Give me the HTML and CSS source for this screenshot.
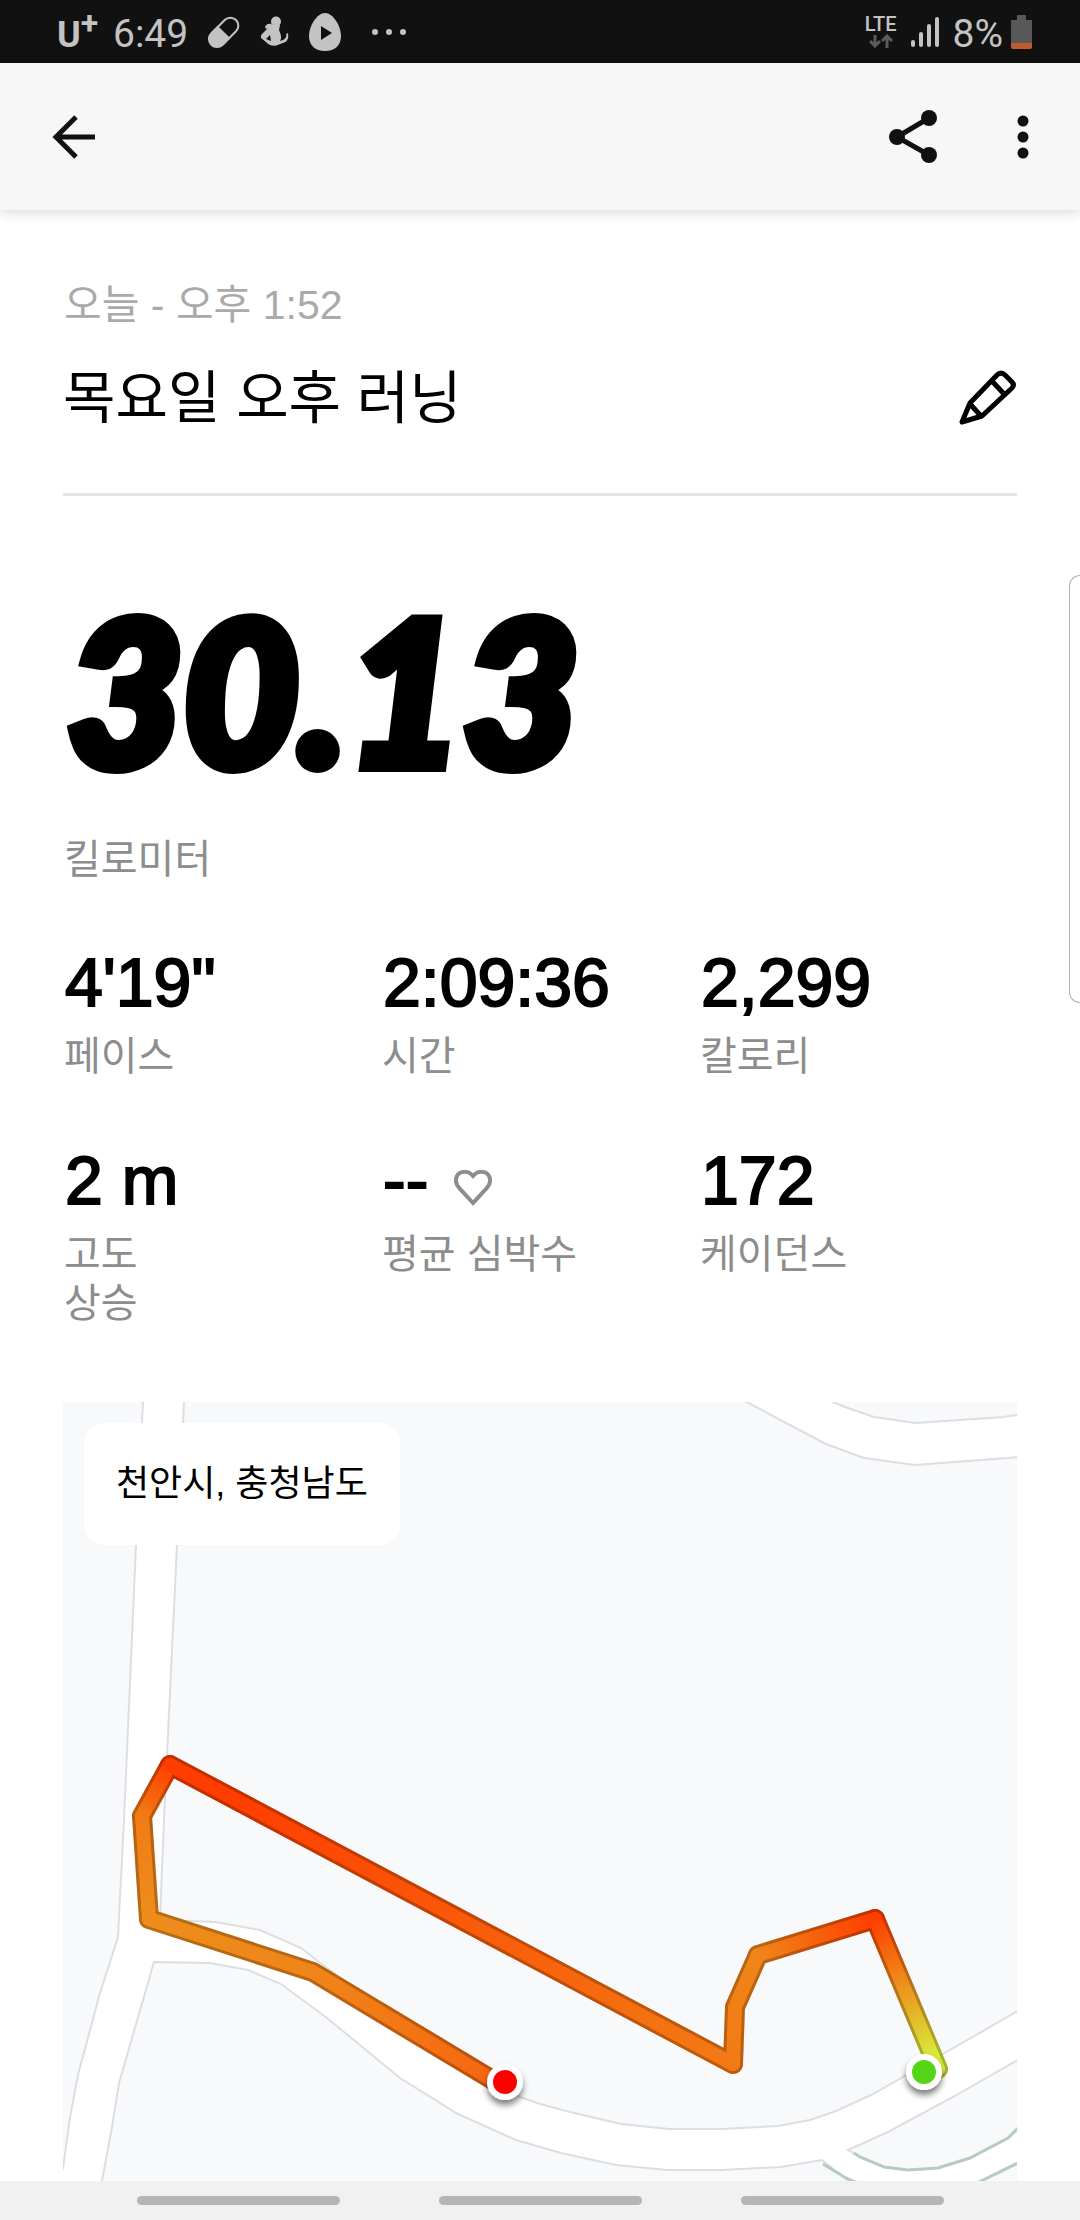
FILE: index.html
```html
<!DOCTYPE html>
<html lang="ko">
<head>
<meta charset="utf-8">
<meta name="viewport" content="width=device-width, initial-scale=1">
<title>목요일 오후 러닝</title>
<link rel="stylesheet" href="styles.css">
</head>
<body>
<div class="status">
  <div class="status-left">
    <span class="carrier">U<span class="carrier-plus">+</span></span>
    <span class="clock">6:49</span>
    <svg class="ic-pill" width="34" height="34" viewBox="0 0 34 34">
      <g transform="rotate(-45 17 17)"><rect x="0" y="9" width="34" height="16" rx="8" fill="none" stroke="#c3c3c3" stroke-width="2"/><path d="M17 8H7A9 9 0 0 0 7 26H17Z" fill="#c3c3c3"/></g>
    </svg>
    <svg class="ic-figure" width="28" height="32" viewBox="0 0 28 32" fill="#c3c3c3">
      <circle cx="15" cy="5.500" r="5"/>
      <path d="M11 9h8l-1 5c2 5 3 8 1 11l3-1c3-2 4-4 3-6l2-1c1 6-1 9-5 10l-3 1c-5 3-11 2-14-2l-5-4c-1-1 0-3 1-4l7-7z"/>
      <path d="M4 11c1-3 4-4 7-3l-1 3-5 2z"/>
      <path d="M5 23l4-4 1 6z" fill="#111"/>
    </svg>
    <svg class="ic-egg" width="32" height="38" viewBox="0 0 32 38">
      <path d="M16 0C24 0 32 13 32 23C32 32 26 38 16 38S0 32 0 23C0 13 8 0 16 0Z" fill="#c3c3c3"/><path d="M12 13L23 20L12 27Z" fill="#111"/>
    </svg>
    <svg class="ic-more" width="34" height="8" viewBox="0 0 34 8" fill="#c3c3c3"><circle cx="3" cy="4" r="3"/><circle cx="17" cy="4" r="3"/><circle cx="31" cy="4" r="3"/></svg>
  </div>
  <div class="status-right">
    <div class="lte"><span>LTE</span>
      <svg width="24" height="14" viewBox="0 0 24 14" fill="none" stroke="#5c5c5c" stroke-width="3"><path d="M6 1V12M1 7L6 12L11 7M18 14V2M13 7L18 2L23 7"/></svg>
    </div>
    <svg width="28" height="32" viewBox="0 0 28 32" stroke="#c3c3c3" stroke-width="4" stroke-linecap="round"><path d="M2 26V29M10 18V29M18 10V29M26 3V29"/></svg>
    <span class="battery">
      <span class="battery-text">8%</span>
      <svg width="21" height="34" viewBox="0 0 21 34"><path d="M6 1Q6 0 7 0H14Q15 0 15 1V5H20Q21 5 21 6V28H0V6Q0 5 1 5H6Z" fill="#585858"/><path d="M0 28H21V32Q21 34 19 34H2Q0 34 0 32Z" fill="#c15a33"/></svg>
    </span>
  </div>
</div>

<header class="appbar">
  <button class="icon-btn" aria-label="뒤로">
    <svg width="44" height="44" viewBox="0 0 44 44" fill="none" stroke="#111" stroke-width="5"><path d="M43 22H5M24 2L4 22L24 42"/></svg>
  </button>
  <div class="appbar-actions">
    <button class="icon-btn" aria-label="공유">
      <svg width="48" height="54" viewBox="0 0 48 54" fill="#111"><path d="M40 8L8 27L40 45" fill="none" stroke="#111" stroke-width="5"/><circle cx="40" cy="8" r="8"/><circle cx="8" cy="27" r="8"/><circle cx="40" cy="45" r="8"/></svg>
    </button>
    <button class="icon-btn" aria-label="더보기">
      <svg width="12" height="44" viewBox="0 0 12 44" fill="#111"><circle cx="6" cy="6" r="5.500"/><circle cx="6" cy="22" r="5.500"/><circle cx="6" cy="38" r="5.500"/></svg>
    </button>
  </div>
</header>

<main class="content">
  <section class="heading">
    <p class="date">오늘 - 오후 1:52</p>
    <div class="title-row">
      <h1 class="title">목요일 오후 러닝</h1>
      <button class="icon-btn" aria-label="제목 편집">
        <svg width="58" height="56" viewBox="0 0 58 56" fill="none" stroke="#000" stroke-width="5" stroke-linejoin="round"><path d="M3 52L11 33L38 5Q42 1 46 5L53 12Q56 15 53 18L23 46ZM33 11L45 24M11 34L22 46"/></svg>
      </button>
    </div>
  </section>

  <section class="distance">
    <p class="distance-value">30.13</p>
    <p class="label">킬로미터</p>
  </section>

  <section class="stats">
    <div><p class="value">4'19"</p><p class="label">페이스</p></div>
    <div><p class="value">2:09:36</p><p class="label">시간</p></div>
    <div><p class="value">2,299</p><p class="label">칼로리</p></div>
    <div><p class="value">2 m</p><p class="label">고도<br>상승</p></div>
    <div>
      <p class="value">--
        <svg class="heart" width="38" height="36" viewBox="0 0 38 36" fill="none" stroke="#8d8d8d" stroke-width="4"><path d="M19 33L6 19C2 15 1 10 3 6C6 1 14 0 19 6C24 0 32 1 35 6C37 10 36 15 32 19Z"/></svg>
      </p>
      <p class="label">평균 심박수</p>
    </div>
    <div><p class="value">172</p><p class="label">케이던스</p></div>
  </section>

  <section class="map" aria-label="러닝 경로">
    <svg class="map-canvas" viewBox="63 1402 954 779" preserveAspectRatio="xMinYMin slice">
      <defs>
        <linearGradient id="g1" gradientUnits="userSpaceOnUse" x1="875" y1="1919" x2="938" y2="2069"><stop offset="0" stop-color="#ff3d00"/><stop offset=".9" stop-color="#d9e83a"/></linearGradient>
        <linearGradient id="g2" gradientUnits="userSpaceOnUse" x1="758" y1="1955" x2="875" y2="1919"><stop offset="0" stop-color="#f08519"/><stop offset="1" stop-color="#ff3d00"/></linearGradient>
        <linearGradient id="g3" gradientUnits="userSpaceOnUse" x1="733" y1="2064" x2="758" y2="1955"><stop offset="0" stop-color="#f37a14"/><stop offset="1" stop-color="#f08519"/></linearGradient>
        <linearGradient id="g4" gradientUnits="userSpaceOnUse" x1="170" y1="1765" x2="733" y2="2064"><stop offset=".1" stop-color="#ff3d00"/><stop offset="1" stop-color="#f37a14"/></linearGradient>
        <linearGradient id="g5" gradientUnits="userSpaceOnUse" x1="170" y1="1765" x2="142" y2="1816"><stop offset="0" stop-color="#ff3d00"/><stop offset="1" stop-color="#f17c15"/></linearGradient>
        <linearGradient id="g6" gradientUnits="userSpaceOnUse" x1="142" y1="1816" x2="149" y2="1919"><stop offset="0" stop-color="#f17c15"/><stop offset="1" stop-color="#ee8d1c"/></linearGradient>
        <linearGradient id="g7" gradientUnits="userSpaceOnUse" x1="149" y1="1919" x2="496" y2="2082"><stop offset="0" stop-color="#ee8d1c"/><stop offset=".5" stop-color="#f08318"/><stop offset="1" stop-color="#f66610"/></linearGradient>
        <filter id="shadow" x="-50%" y="-50%" width="200%" height="200%"><feDropShadow dx="0" dy="5" stdDeviation="3" flood-opacity=".5"/></filter>
        <g id="track" fill="none" stroke-linecap="round" stroke-linejoin="round">
          <path d="M313 1972L496 2082M149 1919L313 1972" stroke="url(#g7)"/>
          <path d="M149 1919L142 1816" stroke="url(#g6)"/>
          <path d="M142 1816L170 1765" stroke="url(#g5)"/>
          <path d="M733 2064L735 2007L758 1955" stroke="url(#g3)"/>
          <path d="M170 1765L733 2064" stroke="url(#g4)"/>
          <path d="M758 1955L875 1919" stroke="url(#g2)"/>
          <path d="M875 1919L938 2069" stroke="url(#g1)"/>
        </g>
      </defs>
      <g fill="#f7f9fb" stroke="#dddee2" stroke-width="2">
        <path d="M50 1390H144L143 1402L136 1545L124 1820L118 1937L100 1993L78 2075L70 2117L63 2168L50 2200Z"/>
        <path d="M185 1390L184 1402L177 1545L167 1755L164 1820L160 1920L191 1921L215 1922L260 1930L301 1948L327 1968L400 2023L450 2060L490 2083L520 2097L540 2104L566 2111L621 2124L669 2129H722L778 2126L810 2120L836 2111L871 2095L905 2076L943 2054L1030 2004V1455L1017 1457L1008 1458L915 1465L864 1458L826 1444L786 1423L747 1402L720 1390Z"/>
        <path d="M810 1390L833 1402L845 1407L874 1417L916 1423L1003 1417L1030 1413V1390Z"/>
        <path d="M154 1962L210 1963L248 1970L281 1984L327 2018L400 2078L458 2114L516 2140L561 2153L616 2165L667 2170L722 2170L781 2167L822 2160L846 2179L870 2200H98L102 2181L112 2127L119 2083Z"/>
        <path d="M848 2150L888 2132L953 2097L1030 2053V2120L1008 2138L970 2158L938 2168L908 2170L884 2167L860 2157Z"/>
        <path d="M1030 2156L981 2181L950 2200H1030Z"/>
      </g>
      <path d="M854 2153L860 2157L884 2167L908 2170L938 2168L970 2158L1008 2138L1020 2126M823 2164L846 2178L860 2184M1020 2162L975 2184" fill="none" stroke="#b5cdc1" stroke-width="3"/>
      <use href="#track" stroke-width="20"/>
      <path d="M496 2082L313 1972L149 1919L142 1816L170 1765L733 2064L735 2007L758 1955L875 1919L938 2069" fill="none" stroke="#000" stroke-opacity=".23" stroke-width="20" stroke-linecap="round" stroke-linejoin="round"/>
      <use href="#track" stroke-width="14"/>
      <g filter="url(#shadow)"><circle cx="505" cy="2082" r="18" fill="#fff"/><circle cx="924" cy="2072" r="18" fill="#fff"/></g>
      <circle cx="505" cy="2082" r="12" fill="#f00"/><circle cx="924" cy="2072" r="12" fill="#52d615"/>
    </svg>
    <span class="place">천안시, 충청남도</span>
  </section>
</main>

<div class="edge-handle"></div>

<nav class="navbar">
  <button class="nav-key" aria-label="최근 앱"></button>
  <button class="nav-key" aria-label="홈"></button>
  <button class="nav-key" aria-label="이전"></button>
</nav>
</body>
</html>
```

FILE: styles.css
```css
* { box-sizing: border-box; }

body {
  margin: 0;
  min-height: 100vh;
  display: flex;
  flex-direction: column;
  position: relative;
  background: #fff;
  color: #000;
  font-family: "Liberation Sans", "Noto Sans CJK KR", sans-serif;
}

p, h1 { margin: 0; font-weight: 400; }
svg { display: block; flex: none; }

button {
  border: 0;
  padding: 0;
  background: none;
}

/* System status bar */
.status {
  height: 63px;
  padding: 0 48px 0 57px;
  display: flex;
  align-items: center;
  justify-content: space-between;
  background: #111;
  color: #c3c3c3;
  font-family: Roboto, sans-serif;
}
.status-left, .status-right { display: flex; align-items: center; }
.status-right { gap: 14px; }
.battery { display: flex; align-items: center; gap: 8px; }
.carrier {
  display: flex;
  width: 56px;
  padding-top: 6px;
  font: 700 36px/48px Roboto, sans-serif;
}
.carrier-plus { font-size: 32px; line-height: 24px; }
.clock, .battery-text { font-size: 39px; line-height: 48px; padding-top: 4px; }
.ic-pill { margin-left: 19px; }
.ic-figure { margin-left: 20px; }
.ic-egg { margin-left: 20px; }
.ic-more { margin-left: 31px; }
.lte {
  display: flex;
  flex-direction: column;
  align-items: center;
  gap: 1px;
  font-size: 20px;
  font-weight: 500;
  line-height: 18px;
}

/* App bar */
.appbar {
  height: 147px;
  padding: 0 51px 0 52px;
  display: flex;
  align-items: center;
  justify-content: space-between;
  background: #f7f7f7;
  box-shadow: 0 2px 12px rgba(0, 0, 0, .16);
}
.appbar-actions { display: flex; align-items: center; gap: 80px; }

.content {
  flex: 1;
  display: flex;
  flex-direction: column;
  padding: 65px 63px 0;
}

.heading { padding-bottom: 59px; border-bottom: 3px solid #e4e5e5; }
.date { padding-left: 1px; font-size: 41px; line-height: 60px; color: #aaa; }
.title-row {
  margin-top: 27px;
  display: flex;
  align-items: center;
  justify-content: space-between;
}
.title { font-size: 57px; line-height: 72px; }

.distance { margin-top: 93px; }
.distance-value {
  padding-left: 4px;
  font: italic 900 200px/200px Lato, sans-serif;
  -webkit-text-stroke: 12px #000;
}
.label { padding-left: 1px; font-size: 40px; line-height: 49px; color: #8d8d8d; }
.distance .label { margin-top: 46px; }

.stats {
  margin-top: 58px;
  display: grid;
  grid-template-columns: repeat(3, 1fr);
  row-gap: 59px;
}
.value {
  display: flex;
  align-items: center;
  gap: 26px;
  margin-bottom: 10px;
  padding-left: 2px;
  font-size: 68px;
  line-height: 80px;
  -webkit-text-stroke: 2px #000;
}
.heart { margin-top: 16px; }

/* Route map */
.map {
  flex: 1;
  min-height: 480px;
  margin-top: 74px;
  position: relative;
  overflow: hidden;
}
.map-canvas { position: absolute; width: 100%; height: 100%; }
.place {
  position: absolute;
  left: 21px;
  top: 21px;
  padding: 0 32px;
  border-radius: 20px;
  background: #fff;
  font-size: 36px;
  line-height: 122px;
}

/* Edge panel tab over the right side of the screen */
.edge-handle {
  position: absolute;
  right: 0;
  top: 575px;
  width: 11px;
  height: 428px;
  border: 1px solid #b4b4b4;
  border-right: 0;
  border-radius: 12px 0 0 12px;
}

/* System navigation */
.navbar {
  height: 39px;
  display: flex;
  align-items: center;
  justify-content: center;
  gap: 99px;
  background: #f1f1f1;
}
.nav-key {
  width: 203px;
  height: 9px;
  border-radius: 5px;
  background: #b5b5b5;
}
```
